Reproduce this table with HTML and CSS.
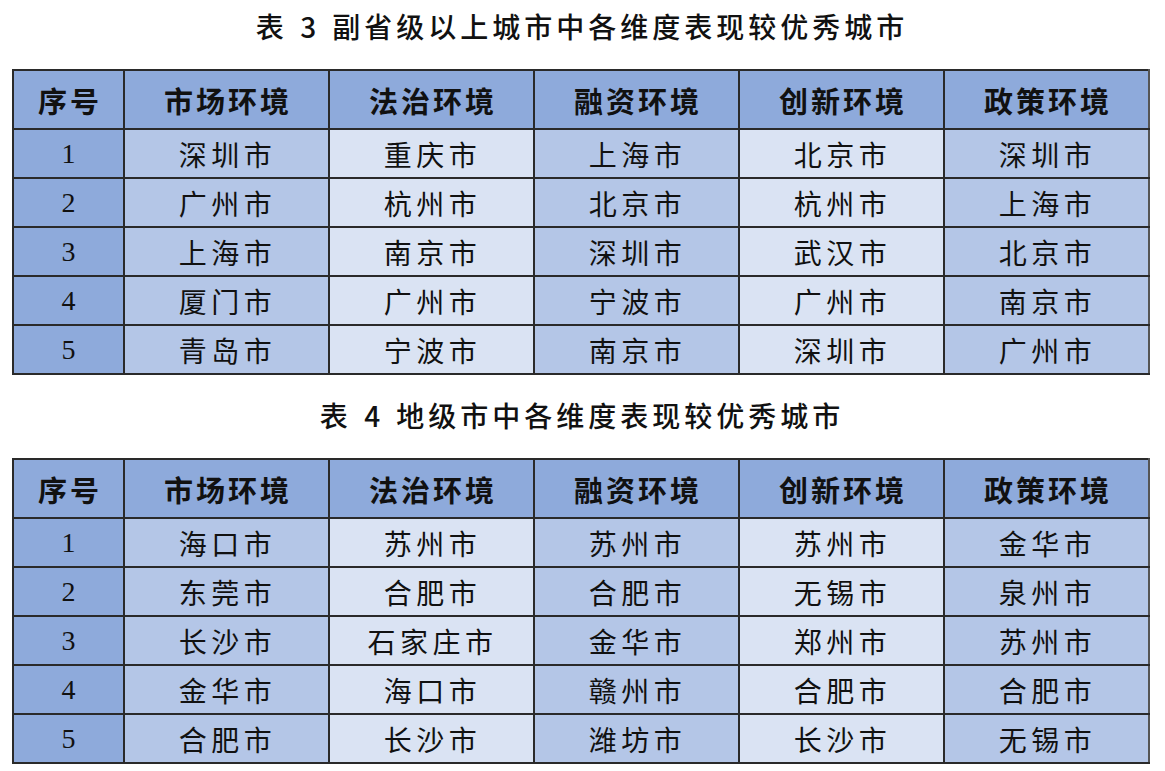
FILE: index.html
```html
<!DOCTYPE html>
<html lang="zh-CN">
<head>
<meta charset="utf-8">
<title>各维度表现较优秀城市</title>
<link rel="stylesheet" href="styles.css">
</head>
<body>
<div class="page">
  <h2 class="caption caption-first"><span class="cap-label">表 3</span>副省级以上城市中各维度表现较优秀城市</h2>
  <table class="grid">
    <colgroup>
      <col class="c-idx"><col class="c-dim"><col class="c-dim"><col class="c-dim"><col class="c-dim"><col class="c-dim">
    </colgroup>
    <thead>
      <tr><th>序号</th><th>市场环境</th><th>法治环境</th><th>融资环境</th><th>创新环境</th><th>政策环境</th></tr>
    </thead>
    <tbody>
      <tr><td class="idx">1</td><td class="mid">深圳市</td><td class="light">重庆市</td><td class="mid">上海市</td><td class="light">北京市</td><td class="mid">深圳市</td></tr>
      <tr><td class="idx">2</td><td class="mid">广州市</td><td class="light">杭州市</td><td class="mid">北京市</td><td class="light">杭州市</td><td class="mid">上海市</td></tr>
      <tr><td class="idx">3</td><td class="mid">上海市</td><td class="light">南京市</td><td class="mid">深圳市</td><td class="light">武汉市</td><td class="mid">北京市</td></tr>
      <tr><td class="idx">4</td><td class="mid">厦门市</td><td class="light">广州市</td><td class="mid">宁波市</td><td class="light">广州市</td><td class="mid">南京市</td></tr>
      <tr><td class="idx">5</td><td class="mid">青岛市</td><td class="light">宁波市</td><td class="mid">南京市</td><td class="light">深圳市</td><td class="mid">广州市</td></tr>
    </tbody>
  </table>

  <h2 class="caption caption-second"><span class="cap-label">表 4</span>地级市中各维度表现较优秀城市</h2>
  <table class="grid">
    <colgroup>
      <col class="c-idx"><col class="c-dim"><col class="c-dim"><col class="c-dim"><col class="c-dim"><col class="c-dim">
    </colgroup>
    <thead>
      <tr><th>序号</th><th>市场环境</th><th>法治环境</th><th>融资环境</th><th>创新环境</th><th>政策环境</th></tr>
    </thead>
    <tbody>
      <tr><td class="idx">1</td><td class="mid">海口市</td><td class="light">苏州市</td><td class="mid">苏州市</td><td class="light">苏州市</td><td class="mid">金华市</td></tr>
      <tr><td class="idx">2</td><td class="mid">东莞市</td><td class="light">合肥市</td><td class="mid">合肥市</td><td class="light">无锡市</td><td class="mid">泉州市</td></tr>
      <tr><td class="idx">3</td><td class="mid">长沙市</td><td class="light">石家庄市</td><td class="mid">金华市</td><td class="light">郑州市</td><td class="mid">苏州市</td></tr>
      <tr><td class="idx">4</td><td class="mid">金华市</td><td class="light">海口市</td><td class="mid">赣州市</td><td class="light">合肥市</td><td class="mid">合肥市</td></tr>
      <tr><td class="idx">5</td><td class="mid">合肥市</td><td class="light">长沙市</td><td class="mid">潍坊市</td><td class="light">长沙市</td><td class="mid">无锡市</td></tr>
    </tbody>
  </table>
</div>
</body>
</html>
```
FILE: styles.css
```css
html, body {
  margin: 0;
  padding: 0;
  background: #ffffff;
}
.page {
  padding: 8px 17px 0 12px;
  width: 1136px;
  font-family: "Liberation Serif", "Noto Sans CJK SC", serif;
  color: #111;
}
.caption {
  margin: 0;
  height: 36px;
  line-height: 36px;
  font-size: 28px;
  font-weight: 500;
  letter-spacing: 4px;
  text-indent: 4px;
  text-align: center;
  font-family: "Noto Sans CJK SC", sans-serif;
  color: #111;
}
.caption-first { margin-bottom: 25px; }
.caption-second { margin-top: 22px; margin-bottom: 25px; }
.cap-label { margin-right: 12px; word-spacing: 2px; }
.grid {
  border-collapse: collapse;
  table-layout: fixed;
  width: 1136px;
}
.c-idx { width: 111px; }
.c-dim { width: 205px; }
.grid th, .grid td {
  border: 2px solid #2a2a2a;
  text-align: center;
  padding: 0;
}
.grid th {
  height: 57px;
  background: #8eaadb;
  font-family: "Noto Sans CJK SC", sans-serif;
  font-size: 29px;
  font-weight: bold;
  letter-spacing: 3px;
  text-indent: 3px;
}
.grid td {
  height: 47px;
  font-family: "Liberation Serif", "Noto Sans CJK SC", serif;
  font-size: 28px;
  font-weight: normal;
  letter-spacing: 4.5px;
  text-indent: 2px;
}
.grid th:last-child, .grid td:last-child { border-right-color: #555; }
.grid td.idx {
  background: #8eaadb;
  letter-spacing: 0;
  text-indent: 0;
}
.grid td.mid { background: #b4c6e7; }
.grid td.light { background: #dae3f3; }
```
